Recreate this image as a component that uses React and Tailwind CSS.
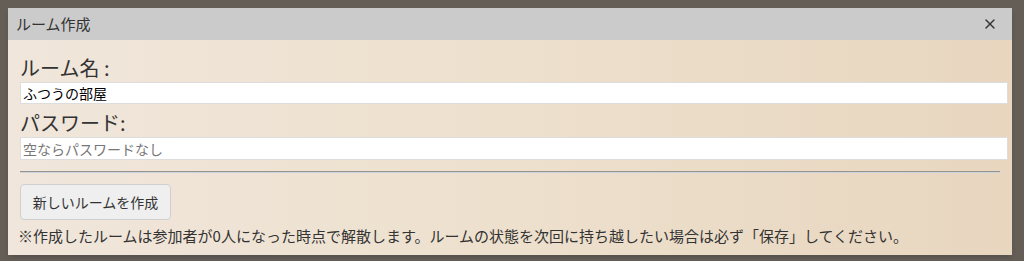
import { X } from 'lucide-react';

const font = { fontFamily: '"Noto Sans CJK JP", "Noto Sans", sans-serif' };

export default function App() {
  return (
    <div className="relative h-[261px] w-[1024px] overflow-hidden bg-[#faebd9]" style={font}>
      {/* dimmed lobby behind the modal */}
      <div className="absolute inset-0 bg-black/60" />

      <div className="absolute left-[8px] top-[8px] w-[1004px] overflow-hidden shadow-md">
        <div className="flex h-[32px] items-center justify-between bg-[#cbcbcb] pl-[8px] pr-[14px]">
          <span className="text-[15px] text-[#333]">ルーム作成</span>
          <X className="h-[16px] w-[16px] text-[#333]" strokeWidth={2} />
        </div>

        <div className="bg-gradient-to-r from-[#f0e6db] via-[#ede0cd] to-[#e8d6bf] pb-[9px] pl-[12px] pr-[4px] pt-[14px] text-[#333]">
          <label className="block text-[20px] leading-[28px]">ルーム名 :</label>
          <input
            className="block h-[22px] w-full border border-[#ddd] bg-white px-[2px] text-[14px] text-black outline-none"
            defaultValue="ふつうの部屋"
          />

          <label className="mt-[5px] block text-[20px] leading-[28px]">パスワード:</label>
          <input
            className="block h-[23px] w-full border border-[#ddd] bg-white px-[2px] text-[14px] text-black outline-none placeholder:text-[#777]"
            placeholder="空ならパスワードなし"
          />

          <hr className="mr-[8px] mt-[11px] border-0 border-t border-b border-t-[#9a948c] border-b-[#c9d3de]" />

          <button className="mt-[11px] h-[36px] w-[151px] rounded-[4px] border border-[#cfcfcf] bg-[#efefef] text-[14px] text-[#333]">
            新しいルームを作成
          </button>

          <p className="mt-[6px] -ml-[2px] text-[15px] leading-[20px] text-[#333]">
            ※作成したルームは参加者が0人になった時点で解散します。ルームの状態を次回に持ち越したい場合は必ず「保存」してください。
          </p>
        </div>
      </div>
    </div>
  );
}
